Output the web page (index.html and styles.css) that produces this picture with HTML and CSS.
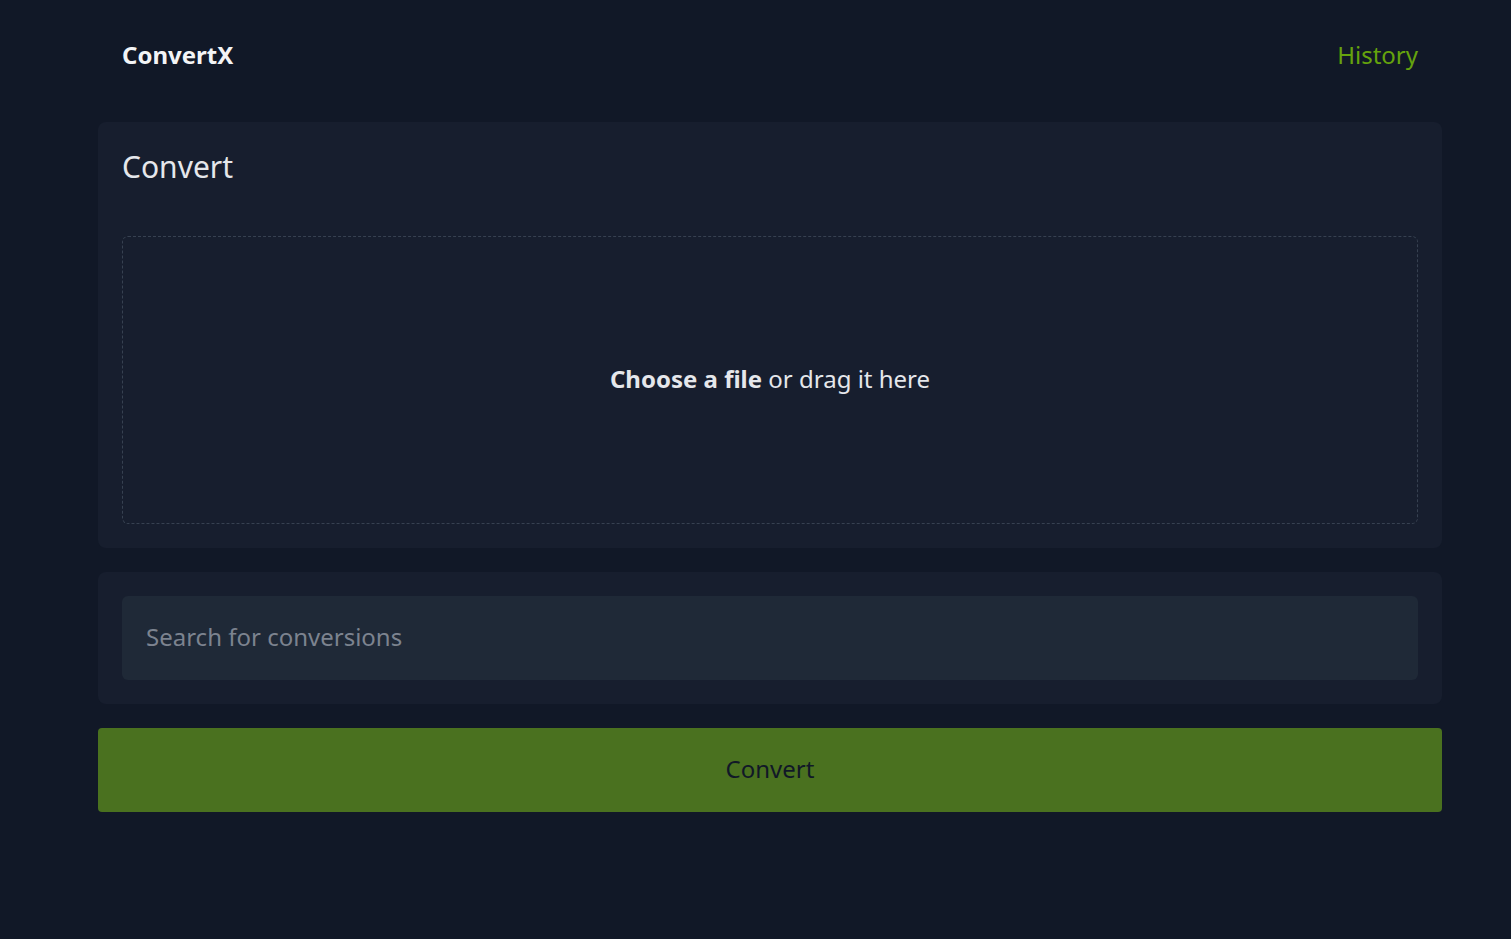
FILE: index.html
```html
<!DOCTYPE html>
<html lang="en">
<head>
<meta charset="utf-8">
<title>ConvertX</title>
<link rel="stylesheet" href="styles.css">
</head>
<body>
<div class="page">
  <header class="header">
    <span class="brand">ConvertX</span>
    <a class="nav-link" href="#">History</a>
  </header>
  <section class="card upload-card">
    <h1 class="card-title">Convert</h1>
    <div class="dropzone">
      <p class="drop-text"><strong>Choose a file</strong> or drag it here</p>
    </div>
  </section>
  <section class="card search-card">
    <input class="search" type="text" placeholder="Search for conversions">
  </section>
  <button class="convert-btn" type="button">Convert</button>
</div>
</body>
</html>
```
FILE: styles.css
```css
* { box-sizing: border-box; }
html, body {
  margin: 0;
  padding: 0;
  background: #111827;
  font-family: "Noto Sans", "Open Sans", sans-serif;
  color: #e5e7eb;
}
.page {
  width: 1344px;
  margin-left: 98px;
  display: flex;
  flex-direction: column;
  gap: 24px;
}
.header {
  height: 98px;
  padding: 10px 24px 0;
  display: flex;
  align-items: center;
  justify-content: space-between;
}
.brand {
  font-size: 24px;
  font-weight: 700;
  color: #f3f4f6;
}
.nav-link {
  font-size: 24px;
  color: #65a30d;
  text-decoration: none;
}
.card {
  background: #171e2e;
  border-radius: 8px;
  padding: 24px;
}
.card-title {
  margin: 0;
  font-size: 30px;
  line-height: 42px;
  font-weight: 400;
  color: #e5e7eb;
}
.dropzone {
  margin-top: 48px;
  height: 288px;
  padding-bottom: 4px;
  border: 1px dashed #374151;
  border-radius: 6px;
  display: flex;
  align-items: center;
  justify-content: center;
}
.drop-text {
  margin: 0;
  font-size: 24px;
  color: #e5e7eb;
}
.drop-text strong { font-weight: 700; }
.search {
  display: block;
  width: 100%;
  height: 84px;
  border: none;
  border-radius: 6px;
  background: #1f2937;
  padding: 0 24px 4px;
  font-family: inherit;
  font-size: 24px;
  color: #e5e7eb;
  outline: none;
}
.search::placeholder { color: #7c838f; }
.convert-btn {
  height: 84px;
  border: none;
  border-radius: 4px;
  background: #4a711f;
  padding: 0 0 4px;
  font-family: inherit;
  font-size: 24px;
  color: #111827;
  cursor: pointer;
}
```
